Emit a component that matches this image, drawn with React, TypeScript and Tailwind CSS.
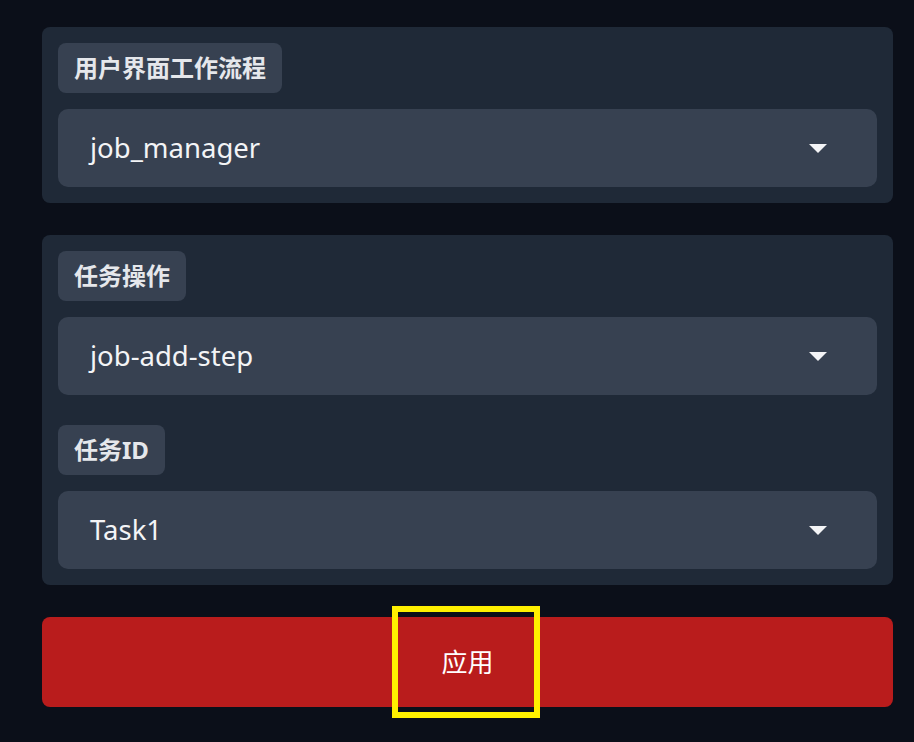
const font = { fontFamily: '"Noto Sans", "Noto Sans CJK SC", sans-serif' };

function Caret() {
  return (
    <svg width="18" height="9" viewBox="0 0 18 9" className="shrink-0">
      <path d="M0 0 H18 L9 9 Z" fill="#f3f4f6" />
    </svg>
  );
}

function Field({ label, value }: { label: string; value: string }) {
  return (
    <div className="flex flex-col gap-4">
      <div className="flex">
        <span className="h-[50px] px-4 flex items-center rounded-lg bg-[#374151] text-[#e5e7eb] text-[24px] font-bold leading-none">
          {label}
        </span>
      </div>
      <div className="h-[78px] rounded-[10px] bg-[#374151] flex items-center justify-between pl-8 pr-[50px]">
        <span className="text-[27.5px] text-[#f3f4f6] leading-none">{value}</span>
        <Caret />
      </div>
    </div>
  );
}

export default function App() {
  return (
    <div className="min-h-[742px] bg-[#0b0f19] pt-[27px] pl-[42px] pr-[21px]" style={font}>
      <div className="flex flex-col gap-8">
        <div className="rounded-lg bg-[#1f2937] p-4">
          <Field label="用户界面工作流程" value="job_manager" />
        </div>
        <div className="rounded-lg bg-[#1f2937] p-4 flex flex-col gap-[30px]">
          <Field label="任务操作" value="job-add-step" />
          <Field label="任务ID" value="Task1" />
        </div>
        <div className="relative">
          <button className="w-full h-[90px] rounded-lg bg-[#b91c1c] text-white text-[26px] flex items-center justify-center">
            应用
          </button>
          <div className="absolute left-[350px] top-[-11px] w-[148px] h-[112px] border-[6px] border-[#fff000] pointer-events-none" />
        </div>
      </div>
    </div>
  );
}
